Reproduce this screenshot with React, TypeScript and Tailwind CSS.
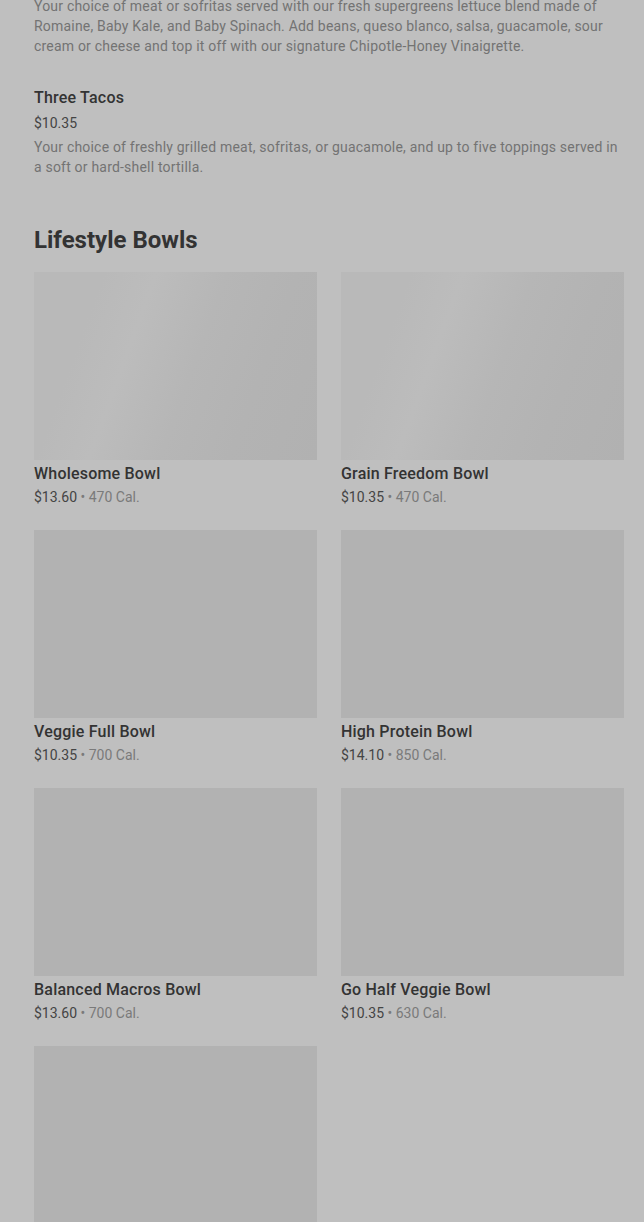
import React from 'react';

const bowls = [
  { name: 'Wholesome Bowl', price: '$13.60', cal: '470 Cal.' },
  { name: 'Grain Freedom Bowl', price: '$10.35', cal: '470 Cal.' },
  { name: 'Veggie Full Bowl', price: '$10.35', cal: '700 Cal.' },
  { name: 'High Protein Bowl', price: '$14.10', cal: '850 Cal.' },
  { name: 'Balanced Macros Bowl', price: '$13.60', cal: '700 Cal.' },
  { name: 'Go Half Veggie Bowl', price: '$10.35', cal: '630 Cal.' },
  { name: '', price: '', cal: '' },
];

function BowlCard({ bowl, shimmer }: { bowl: (typeof bowls)[number]; shimmer: boolean }) {
  return (
    <div className="flex flex-col">
      <div
        className={`h-[188px] w-full ${
          shimmer
            ? 'bg-[linear-gradient(110deg,#b9b9b9_0%,#b9b9b9_20%,#bcbcbc_35%,#b6b6b6_55%,#b3b3b3_75%,#b1b1b1_100%)]'
            : 'bg-[#b2b2b2]'
        }`}
      />
      {bowl.name && (
        <div className="pt-[4px]">
          <div className="text-[16px] leading-[20px] font-medium tracking-[0.2px] text-[#333333]">{bowl.name}</div>
          <div className="mt-[3px] text-[14px] leading-[20px]">
            <span className="text-[#444444]">{bowl.price}</span>
            <span className="text-[#7a7a7a]"> • {bowl.cal}</span>
          </div>
        </div>
      )}
    </div>
  );
}

export default function App() {
  return (
    <div className="h-[1222px] overflow-hidden bg-[#bfbfbf] pl-[34px] pr-[20px] font-['Roboto',sans-serif]">
      {/* Previous item description (scrolled) */}
      <p className="-mt-[4px] text-[14px] leading-[20px] tracking-[0.2px] text-[#737373]">
        Your choice of meat or sofritas served with our fresh supergreens lettuce blend made of Romaine, Baby Kale, and Baby Spinach. Add beans, queso blanco, salsa, guacamole, sour cream or cheese and top it off with our signature Chipotle-Honey Vinaigrette.
      </p>

      <div className="mt-[31px]">
        <div className="text-[16px] leading-[22px] font-medium tracking-[0.2px] text-[#333333]">Three Tacos</div>
        <div className="mt-[4px] text-[14px] leading-[20px] text-[#444444]">$10.35</div>
        <p className="mt-[4px] text-[14px] leading-[20px] tracking-[0.2px] text-[#737373]">
          Your choice of freshly grilled meat, sofritas, or guacamole, and up to five toppings served in a soft or hard-shell tortilla.
        </p>
      </div>

      <h2 className="mt-[47px] text-[24px] leading-[32px] font-bold text-[#333333]">
        Lifestyle Bowls
      </h2>

      <div className="mt-[16px] grid grid-cols-2 gap-x-[24px] gap-y-[23px]">
        {bowls.map((b, i) => (
          <BowlCard key={i} bowl={b} shimmer={i < 2} />
        ))}
      </div>
    </div>
  );
}
